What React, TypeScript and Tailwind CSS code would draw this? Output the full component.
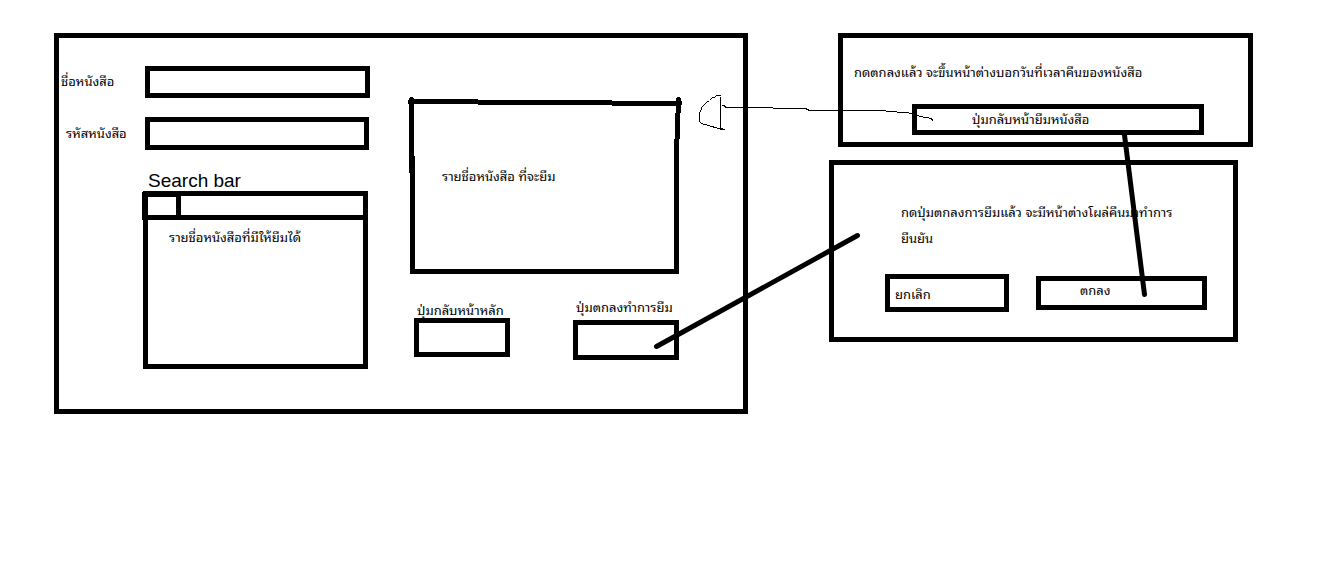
import type { ReactNode } from "react";

const THAI = "font-['Liberation_Sans','Noto_Sans_Thai_Looped','Loma','Noto_Sans_Thai',sans-serif] text-[13px] leading-5";

function Field({ id, label, indent, size }: { id: string; label: string; indent: string; size: string }) {
  return (
    <div className="flex items-center">
      <label htmlFor={id} className={`w-[86px] shrink-0 whitespace-nowrap ${indent}`}>{label}</label>
      <input id={id} type="text" className={`w-0 min-w-0 flex-1 border-5 border-black bg-white px-2 outline-none ${size}`} />
    </div>
  );
}

function Dialog({ className, children }: { className: string; children: ReactNode }) {
  return <section className={`border-5 border-black ${className}`}>{children}</section>;
}

function SketchFrame() {
  return (
    <svg className="absolute inset-0 h-full w-full overflow-visible" viewBox="0 0 269 174" preserveAspectRatio="none" shapeRendering="crispEdges" aria-hidden="true">
      <path d="M-1 -1V-2L0 -3H2L4 -2V-1H68V0H202V1H266V-2L267 -3H269L271 -2V1H272V5H271V13H270V39H269V174H0V73H-1V4H-2V0Z M4 4V56H5V169H264V59H264V39H265V13H266V6H202V5H68V4Z" fillRule="evenodd" />
    </svg>
  );
}

function Connectors() {
  return (
    <svg className="pointer-events-none absolute inset-0 h-full w-full" viewBox="0 0 1337 565" preserveAspectRatio="none" fill="none" stroke="black" strokeLinecap="round" aria-hidden="true">
      <path strokeWidth="5" d="M656.500 346.500L857.500 235.500M1124.500 135L1144.500 294.500" />
      <path shapeRendering="crispEdges" d="M720.500 97.500V129.500M720.500 95.500H716.500L714.500 97.500H712.500L709.500 100.500L706.500 102.500L701.500 107.500V109.500L699.500 112.500V121.500L701.500 123.500L708.500 125.500L718.500 128.500L724.500 129.500M719.500 128.500H722.500M722.500 105.500H724.500L725.500 107.500H772.500M773 108.500H805.500L809.500 110.500H885.500M886 111.500H896.500M897 112.500H907.500L913.500 114.500L920.500 116.500L931.500 118.500L932.500 120.500" />
    </svg>
  );
}

export default function App() {
  return (
    <div className={`relative grid min-h-[565px] grid-cols-[694fr_424fr] items-start gap-x-[81px] bg-white pt-[33px] pr-[84px] pl-[54px] text-black ${THAI}`}>
      <main className="grid grid-cols-[311fr_269fr] gap-x-10 border-5 border-black pt-7 pr-16 pb-10">
        <form className="flex min-w-0 flex-col">
          <Field id="title" label="ชื่อหนังสือ" indent="pl-0.5" size="h-8" />
          <div className="mt-[19px] mr-px">
            <Field id="code" label="รหัสหนังสือ" indent="pl-[7px]" size="h-[33px]" />
          </div>
          <label htmlFor="search" className="mt-5 ml-[89px] text-[19px] leading-[21px]">Search bar</label>
          <div className="mr-0.5 ml-[84px] h-[178px] border-5 border-black">
            <div className="flex h-6 border-b-5 border-black">
              <button type="button" aria-label="Search" className="-mt-1 -ml-1.5 h-7 w-[39px] shrink-0 border-5 border-black" />
              <input id="search" type="text" className="w-0 min-w-0 flex-1 px-2 outline-none" />
            </div>
            <p className="pt-2 pl-[21px]">รายชื่อหนังสือที่มีให้ยืมได้</p>
          </div>
        </form>
        <div className="flex min-w-0 flex-col pt-[34px]">
          <section className="relative h-[174px]">
            <SketchFrame />
            <p className="pt-[67px] pl-8">รายชื่อหนังสือ ที่จะยืม</p>
          </section>
          <div className="mt-6 flex items-start justify-between pl-1">
            <div className="flex w-24 flex-col pt-[3px]">
              <label htmlFor="back" className="-mb-[3px] pl-[3px] whitespace-nowrap">ปุ่มกลับหน้าหลัก</label>
              <button id="back" type="button" className="h-[39px] border-5 border-black" />
            </div>
            <div className="flex w-[106px] flex-col gap-0.5">
              <label htmlFor="confirm" className="pl-[3px] whitespace-nowrap">ปุ่มตกลงทำการยืม</label>
              <button id="confirm" type="button" className="h-10 border-5 border-black" />
            </div>
          </div>
        </div>
      </main>
      <div className="flex flex-col gap-[13px]">
        <Dialog className="ml-[9px] px-[11px] pt-[25px] pb-[7px]">
          <p>กดตกลงแล้ว จะขึ้นหน้าต่างบอกวันที่เวลาคืนของหนังสือ</p>
          <button type="button" className="mt-[21px] ml-[58px] block h-[31px] w-[292px] border-5 border-black pl-[55px] text-left">ปุ่มกลับหน้ายืมหนังสือ</button>
        </Dialog>
        <Dialog className="mr-[15px] px-[26px] pt-[35px] pb-[25px]">
          <p className="pl-[41px] leading-[26px]">กดปุ่มตกลงการยืมแล้ว จะมีหน้าต่างโผล่คืนมาทำการ<br />ยืนยัน</p>
          <div className="mt-[22px] ml-[25px] flex items-center gap-[27px]">
            <button type="button" className="h-[38px] w-[124px] border-5 border-black pt-1 pl-[5px] text-left">ยกเลิก</button>
            <button type="button" className="h-[34px] w-[171px] border-5 border-black pb-1 pl-[39px] text-left">ตกลง</button>
          </div>
        </Dialog>
      </div>
      <Connectors />
    </div>
  );
}
